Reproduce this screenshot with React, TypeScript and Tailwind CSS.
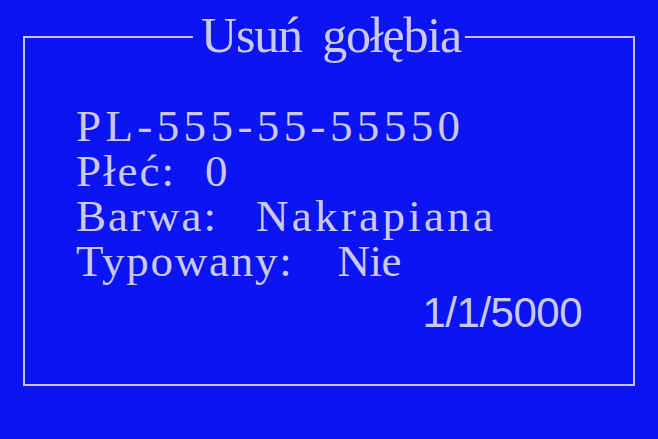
import React from 'react';

const rows = [
  { label: 'Płeć:', value: '0', gap: 'ml-[29px]', track: 'tracking-[2px]' },
  { label: 'Barwa:', value: 'Nakrapiana', gap: 'ml-[38px]', track: 'tracking-[3.3px]' },
  { label: 'Typowany:', value: 'Nie', gap: 'ml-[44px]', track: 'tracking-[-0.5px]' },
];

const App = () => {
  return (
    <div className="w-[658px] h-[439px] bg-[#0b14f2] pt-[10px] px-[23px] overflow-hidden font-['Liberation_Serif',serif] text-[#cacae8]">
      <fieldset className="h-[376px] border-2 border-[#c4c4e4] pt-[40px] px-[51px]">
        <legend className="mx-auto pl-[8px] pr-[4px] pb-1 text-[50px] leading-[50px] tracking-[-1.2px] [word-spacing:9px]">
          Usuń gołębia
        </legend>

        <div className="text-[45px] leading-[45px] whitespace-nowrap">
          <div className="tracking-[4.4px]">PL-555-55-55550</div>
          {rows.map((row) => (
            <div key={row.label}>
              <span className={row.label === 'Typowany:' ? 'tracking-[1.75px]' : 'tracking-[2px]'}>{row.label}</span>
              <span className={`${row.gap} ${row.track}`}>{row.value}</span>
            </div>
          ))}
          <div className="mt-[6px] text-right font-['Liberation_Sans',sans-serif] text-[42px] tracking-[-0.5px]">
            1/1/5000
          </div>
        </div>
      </fieldset>
    </div>
  );
};

export default App;
